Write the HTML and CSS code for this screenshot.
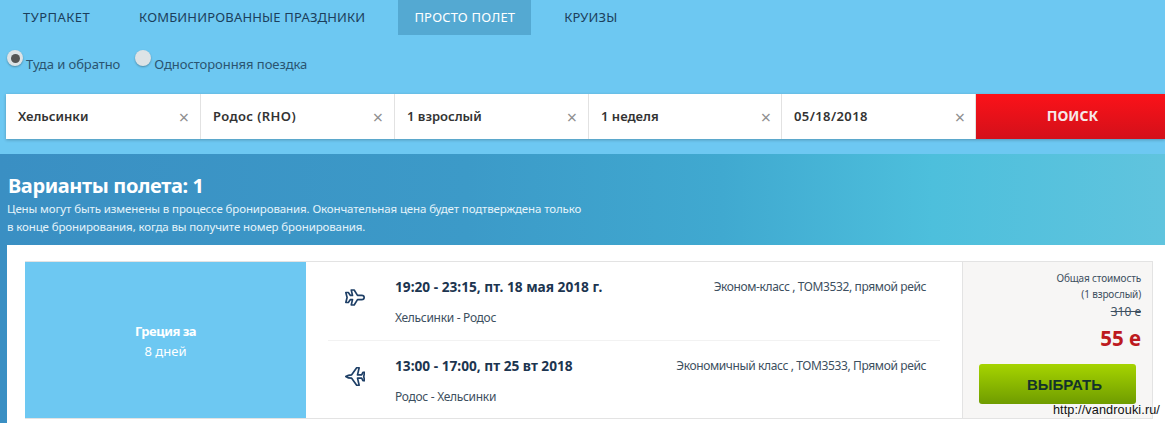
FILE: index.html
```html
<!DOCTYPE html>
<html lang="ru">
<head>
  <meta charset="UTF-8">
  <meta name="viewport" content="width=device-width, initial-scale=1.0">
  <title>Просто полет</title>
  <link rel="stylesheet" href="styles.css">
</head>
<body>
  <ul class="tabs">
    <li><a href="#">ТУРПАКЕТ</a></li>
    <li><a href="#">КОМБИНИРОВАННЫЕ ПРАЗДНИКИ</a></li>
    <li class="active"><a href="#">ПРОСТО ПОЛЕТ</a></li>
    <li><a href="#">КРУИЗЫ</a></li>
  </ul>

  <div class="trip-type">
    <label class="radio-item"><span class="radio checked"></span><span class="radio-text">Туда и обратно</span></label>
    <label class="radio-item"><span class="radio"></span><span class="radio-text">Односторонняя поездка</span></label>
  </div>

  <form class="search">
    <div class="field"><span class="value">Хельсинки</span><span class="clear">&times;</span></div>
    <div class="field"><span class="value wide">Родос (RHO)</span><span class="clear">&times;</span></div>
    <div class="field"><span class="value">1 взрослый</span><span class="clear">&times;</span></div>
    <div class="field"><span class="value">1 неделя</span><span class="clear">&times;</span></div>
    <div class="field"><span class="value wide">05/18/2018</span><span class="clear">&times;</span></div>
    <button class="search-btn" type="button">ПОИСК</button>
  </form>

  <section class="results">
    <h1>Варианты полета: 1</h1>
    <p class="note">Цены могут быть изменены в процессе бронирования. Окончательная цена будет подтверждена только<br>в конце бронирования, когда вы получите номер бронирования.</p>

    <div class="card">
      <div class="offer">
        <div class="destination">
          <strong>Греция за</strong>
          <span>8 дней</span>
        </div>

        <div class="flights">
          <div class="flight">
            <svg class="plane" viewBox="0 0 24 24">
              <path d="M1 6 L4 6 L6.5 9.5 L9 9.5 L7.5 3 L11 3 L15 9.5 L20 9.5 C22 9.5 23 11 23 12 C23 13 22 14.5 20 14.5 L15 14.5 L11 21 L7.5 21 L9 14.5 L6.5 14.5 L4 18 L1 18 L2.5 12 Z"/>
            </svg>
            <div class="flight-info">
              <div class="flight-top">
                <span class="times">19:20 - 23:15, пт. 18 мая 2018 г.</span>
                <span class="flight-class">Эконом-класс , ТОМ3532, прямой рейс</span>
              </div>
              <div class="route">Хельсинки - Родос</div>
            </div>
          </div>
          <div class="flight">
            <svg class="plane" viewBox="0 0 24 24">
              <path d="M1 12 C3 10.5 5 10 8 10 L14 1.5 L17 1.5 L15 10 L20 10 L21.5 7 L23.5 7 L22.5 12 L23.5 17 L21.5 17 L20 14 L15 14 L17 22.5 L14 22.5 L8 14 C5 14 3 13.5 1 12 Z"/>
            </svg>
            <div class="flight-info">
              <div class="flight-top">
                <span class="times">13:00 - 17:00, пт 25 вт 2018</span>
                <span class="flight-class">Экономичный класс , ТОМ3533, Прямой рейс</span>
              </div>
              <div class="route">Родос - Хельсинки</div>
            </div>
          </div>
        </div>

        <div class="price">
          <div class="price-label">Общая стоимость</div>
          <div class="price-label">(1 взрослый)</div>
          <div class="price-old">310 е</div>
          <div class="price-new">55 е</div>
          <button class="select-btn" type="button">ВЫБРАТЬ</button>
        </div>
      </div>
    </div>
  </section>

  <div class="watermark">http://vandrouki.ru/</div>
</body>
</html>
```

FILE: styles.css
```css
html, body {
  margin: 0;
  padding: 0;
  height: 423px;
  overflow: hidden;
}

body {
  background-color: #6dc8f2;
  font-family: "Noto Sans", sans-serif;
  color: #1c3550;
  position: relative;
}

.tabs {
  list-style-type: none;
  margin: 0;
  padding: 0 0 0 7px;
  display: flex;
  gap: 17px;
  height: 35px;
}

.tabs a {
  display: block;
  padding: 8px 16px 0;
  height: 27px;
  color: #1c3f5c;
  font-size: 13px;
  letter-spacing: 0.18px;
  text-decoration: none;
}

.tabs li:first-child a {
  letter-spacing: 0.45px;
}

.tabs .active {
  background-color: #54a9d2;
}

.tabs .active a {
  color: #fff;
}

.trip-type {
  display: flex;
  gap: 15px;
  padding: 15px 0 0 7px;
  box-sizing: border-box;
  height: 59px;
}

.radio-item {
  display: flex;
  font-size: 13px;
  letter-spacing: -0.06px;
  color: #2a5470;
}

.radio {
  width: 16px;
  height: 16px;
  border-radius: 50%;
  background-color: #dde3e6;
  box-shadow: 0 1px 2px rgba(0, 0, 0, 0.3);
  position: relative;
}

.radio.checked::after {
  content: "";
  position: absolute;
  left: 3.5px;
  top: 3.5px;
  width: 9px;
  height: 9px;
  border-radius: 50%;
  background-color: #555;
}

.radio-text {
  margin-top: 5px;
  margin-left: 3px;
}

.search {
  display: flex;
  margin-left: 6px;
  height: 45px;
  box-shadow: 0 1px 3px rgba(0, 0, 0, 0.25);
}

.field {
  flex: 0 0 194px;
  box-sizing: border-box;
  display: flex;
  align-items: center;
  justify-content: space-between;
  padding: 0 11px 0 12px;
  background-color: #fff;
  border-right: 1px solid #e2e2e2;
  font-size: 13px;
  font-weight: 600;
  color: #333;
}

.field:first-child {
  flex-basis: 195px;
}

.field:nth-child(4) {
  flex-basis: 193px;
  padding-right: 10px;
}

.field:nth-child(5) {
  padding-right: 10px;
}

.value {
  margin-bottom: 2px;
}

.wide {
  letter-spacing: 0.4px;
}

.clear {
  color: #8f8f8f;
  font-size: 18px;
  font-weight: 400;
}

.search-btn {
  flex: 1;
  border: 0;
  padding: 0 0 3px 4px;
  background: linear-gradient(#fb1219, #d3101a);
  color: #f6e8e8;
  font-family: inherit;
  font-size: 14px;
  font-weight: 700;
}

.results {
  margin-top: 15px;
  height: 269px;
  padding: 20px 0 0 0;
  box-sizing: border-box;
  background: linear-gradient(90deg, #3a8fc3 0%, #3c9ac8 40%, #40a9d0 62%, #4dbfdc 80%, #60c4de 100%);
  color: #fff;
}

.results h1 {
  margin: 0 0 0 8px;
  font-size: 20px;
  line-height: 24px;
  letter-spacing: -0.38px;
  font-weight: 700;
}

.note {
  margin: 2px 0 0 7px;
  font-size: 11.5px;
  line-height: 18px;
  letter-spacing: -0.12px;
  color: #e4f3fa;
}

.card {
  margin: 9px 0 0 7px;
  background-color: #fff;
  padding: 16px 12px 0 18px;
  height: 178px;
  color: #1c3550;
}

.offer {
  display: flex;
  height: 158px;
  border: 1px solid #e3e3e3;
  border-left: 0;
  box-sizing: border-box;
}

.destination {
  flex: 0 0 281px;
  box-sizing: border-box;
  padding-top: 2px;
  background-color: #6dc8f2;
  color: #fff;
  display: flex;
  flex-direction: column;
  align-items: center;
  justify-content: center;
  font-size: 13px;
  line-height: 20px;
}

.destination strong {
  letter-spacing: -0.5px;
}

.flights {
  flex: 1;
  padding: 0 22px;
}

.flight {
  display: flex;
  height: 79px;
  box-sizing: border-box;
  border-bottom: 1px solid #f2f2f2;
}

.flight:last-child {
  border-bottom: 0;
}

.plane {
  width: 20px;
  height: 21px;
  margin: 25px 30px 0 17px;
  flex: none;
  fill: none;
  stroke: #1e3f66;
  stroke-width: 2;
  stroke-linejoin: round;
}

.flight-info {
  flex: 1;
}

.flight-top {
  display: flex;
  justify-content: space-between;
  padding: 15px 14px 0 0;
}

.times {
  font-size: 13.7px;
  font-weight: 700;
}

.flight-class {
  margin-top: 1px;
  font-size: 12px;
  letter-spacing: -0.38px;
  color: #3d4f60;
}

.route {
  margin-top: 13px;
  font-size: 12px;
  letter-spacing: -0.3px;
  color: #3d4f60;
}

.price {
  flex: 0 0 190px;
  box-sizing: border-box;
  background-color: #f7f6f5;
  border-left: 1px solid #e3e3e3;
  text-align: right;
  padding: 8px 11px 0 16px;
  font-size: 10px;
  line-height: 16px;
  letter-spacing: -0.15px;
  color: #3d4f60;
}

.price-old {
  margin-top: 2px;
  text-decoration: line-through;
  font-size: 12px;
  letter-spacing: 0;
}

.price-new {
  margin-top: 3px;
  font-size: 20.5px;
  font-weight: 700;
  line-height: 30px;
  letter-spacing: 0;
  color: #bd1a20;
}

.select-btn {
  display: block;
  width: 157px;
  height: 40px;
  margin-top: 11px;
  padding: 0 0 0 14px;
  border: 0;
  border-radius: 3px;
  background: linear-gradient(#a6d400, #6f9c00);
  color: #14332a;
  font-family: "Liberation Sans", sans-serif;
  font-size: 15px;
  font-weight: 700;
}

.watermark {
  position: absolute;
  right: 5px;
  top: 403px;
  font-family: "Liberation Sans", sans-serif;
  font-size: 12.7px;
  letter-spacing: 0.1px;
  color: #111;
}
```
